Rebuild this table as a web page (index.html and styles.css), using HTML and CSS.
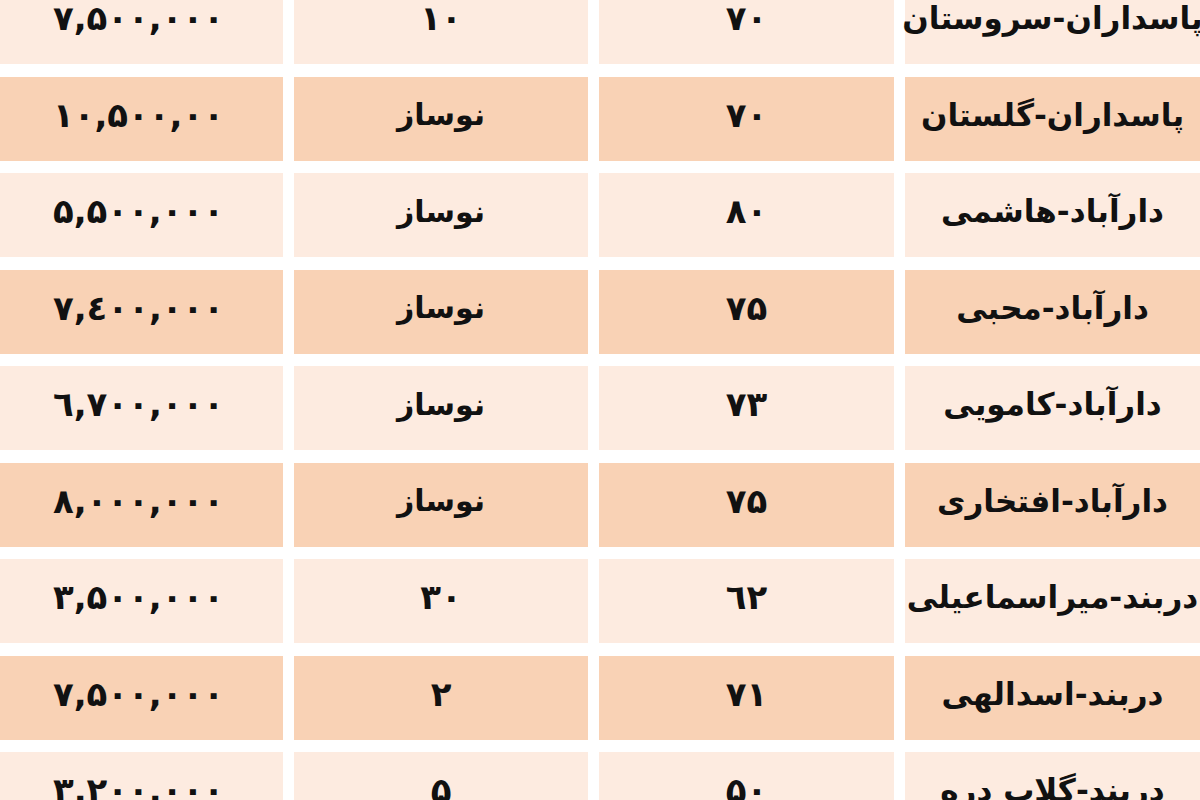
FILE: index.html
```html
<!DOCTYPE html>
<html lang="fa" dir="rtl">
<head>
<meta charset="utf-8">
<title>قیمت آپارتمان</title>
<link rel="stylesheet" href="styles.css">
</head>
<body>
<div class="table">
  <div class="cell light name">پاسداران-سروستان</div><div class="cell light num">۷۰</div><div class="cell light num">۱۰</div><div class="cell light price">۷,۵۰۰,۰۰۰</div>
  <div class="cell dark name">پاسداران-گلستان</div><div class="cell dark num">۷۰</div><div class="cell dark">نوساز</div><div class="cell dark price">۱۰,۵۰۰,۰۰</div>
  <div class="cell light name">دارآباد-هاشمی</div><div class="cell light num">۸۰</div><div class="cell light">نوساز</div><div class="cell light price">۵,۵۰۰,۰۰۰</div>
  <div class="cell dark name">دارآباد-محبی</div><div class="cell dark num">۷۵</div><div class="cell dark">نوساز</div><div class="cell dark price">۷,٤۰۰,۰۰۰</div>
  <div class="cell light name">دارآباد-کامویی</div><div class="cell light num">۷۳</div><div class="cell light">نوساز</div><div class="cell light price">٦,۷۰۰,۰۰۰</div>
  <div class="cell dark name">دارآباد-افتخاری</div><div class="cell dark num">۷۵</div><div class="cell dark">نوساز</div><div class="cell dark price">۸,۰۰۰,۰۰۰</div>
  <div class="cell light name">دربند-میراسماعیلی</div><div class="cell light num">٦۲</div><div class="cell light num">۳۰</div><div class="cell light price">۳,۵۰۰,۰۰۰</div>
  <div class="cell dark name">دربند-اسدالهی</div><div class="cell dark num">۷۱</div><div class="cell dark num">۲</div><div class="cell dark price">۷,۵۰۰,۰۰۰</div>
  <div class="cell light name">دربند-گلاب دره</div><div class="cell light num">۵۰</div><div class="cell light num">۵</div><div class="cell light price">۳,۲۰۰,۰۰۰</div>
</div>
</body>
</html>
```
FILE: styles.css
```css
html, body {
  margin: 0;
  padding: 0;
  background: #ffffff;
  overflow: hidden;
}
body {
  width: 1200px;
  height: 800px;
  font-family: "DejaVu Sans", "Noto Sans", sans-serif;
  color: #111;
}
.table {
  direction: rtl;
  display: grid;
  grid-template-columns: 295px 295px 294px 283px;
  grid-auto-rows: 84px;
  column-gap: 11px;
  row-gap: 12.5px;
  margin-top: -20px;
}
.cell {
  display: flex;
  align-items: center;
  justify-content: center;
  font-size: 30px;
  font-weight: bold;
  white-space: nowrap;
  padding-bottom: 8px;
  box-sizing: border-box;
}
.light {
  background: #fdebe0;
}
.dark {
  background: #f9d2b5;
}
.name {
  font-size: 31px;
}
.num {
  font-size: 34px;
}
.price {
  direction: ltr;
  font-size: 34px;
  letter-spacing: 2px;
  padding-right: 6px;
}
```
